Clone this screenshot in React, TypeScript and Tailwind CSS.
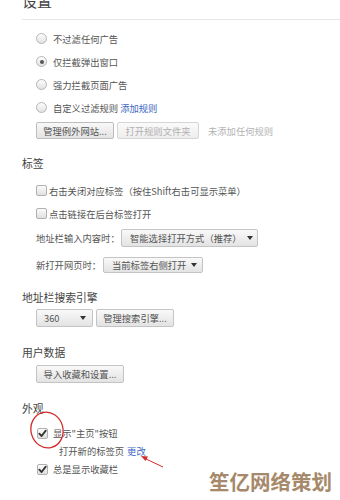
import React from "react";

const Radio = ({ checked }: { checked?: boolean }) => (
  <span className="w-[11px] h-[11px] rounded-full border border-[#b5b5b5] bg-gradient-to-b from-[#fdfdfd] to-[#e2e2e2] flex items-center justify-center shrink-0">
    {checked && <span className="w-[4px] h-[4px] rounded-full bg-[#555]" />}
  </span>
);

const Check = ({ checked }: { checked?: boolean }) => (
  <span className="w-[11px] h-[11px] rounded-[2px] border border-[#b0b0b0] bg-gradient-to-b from-[#fbfbfb] to-[#e0e0e0] flex items-center justify-center shrink-0">
    {checked && (
      <svg width="9" height="9" viewBox="0 0 10 10">
        <path d="M1.5 5.2 L4 7.8 L8.6 1.8" stroke="#333" strokeWidth="2" fill="none" strokeLinecap="round" strokeLinejoin="round" />
      </svg>
    )}
  </span>
);

const Btn = ({ children, w, disabled }: { children: React.ReactNode; w: string; disabled?: boolean }) => (
  <span
    className={
      "h-[17px] border rounded-[2px] flex items-center justify-center shrink-0 bg-gradient-to-b " +
      w +
      (disabled
        ? " border-[#d6d6d6] from-[#fafafa] to-[#eeeeee] text-[#b0b0b0]"
        : " border-[#bdbdbd] from-[#f9f9f9] to-[#e3e3e3] text-[#555]")
    }
  >
    {children}
  </span>
);

const Tri = () => (
  <svg width="6" height="4" viewBox="0 0 6 4" className="shrink-0">
    <path d="M0 0 H6 L3 4 Z" fill="#333" />
  </svg>
);

export default function App() {
  return (
    <div className="w-[340px] h-[500px] relative overflow-hidden bg-white text-[#555] text-[9.3px] leading-[12px] font-['Noto_Sans_CJK_SC',sans-serif]">
      {/* title */}
      <div className="ml-[22px] h-[20px] border-b border-[#e6e6e6] flex items-start overflow-hidden">
        <span className="block -mt-[7px] text-[15px] leading-[16px] text-[#444]">设置</span>
      </div>

      {/* ad filtering */}
      <div className="pl-[36px] mt-[7px]">
        <div className="h-[23px] flex items-center gap-[6px]">
          <Radio />
          <span>不过滤任何广告</span>
        </div>
        <div className="h-[23px] flex items-center gap-[6px]">
          <Radio checked />
          <span>仅拦截弹出窗口</span>
        </div>
        <div className="h-[23px] flex items-center gap-[6px]">
          <Radio />
          <span>强力拦截页面广告</span>
        </div>
        <div className="h-[23px] flex items-center gap-[6px]">
          <Radio />
          <span>
            自定义过滤规则 <span className="text-[#3b66c4]">添加规则</span>
          </span>
        </div>
        <div className="mt-[3px] flex items-center">
          <Btn w="w-[78px]">管理例外网站...</Btn>
          <span className="w-[3px]" />
          <Btn w="w-[82px]" disabled>
            打开规则文件夹
          </Btn>
          <span className="ml-[9px] text-[#b3b3b3]">未添加任何规则</span>
        </div>
      </div>

      {/* tabs */}
      <div className="ml-[22px] mt-[17px] text-[10.8px] leading-[14px] text-[#444]">标签</div>
      <div className="pl-[36px] mt-[9px]">
        <div className="h-[23px] flex items-center gap-[2px]">
          <Check />
          <span>右击关闭对应标签（按住Shift右击可显示菜单）</span>
        </div>
        <div className="h-[23px] flex items-center gap-[2px]">
          <Check />
          <span>点击链接在后台标签打开</span>
        </div>
        <div className="mt-[4px] flex items-center">
          <span className="w-[85px]">地址栏输入内容时：</span>
          <span className="h-[18px] w-[137px] border border-[#c4c4c4] rounded-[2px] bg-gradient-to-b from-[#f9f9f9] to-[#e3e3e3] flex items-center pl-[8px] pr-[4px] text-[#555]">
            <span className="flex-1">智能选择打开方式（推荐）</span>
            <Tri />
          </span>
        </div>
        <div className="mt-[10px] flex items-center">
          <span className="w-[67px]">新打开网页时：</span>
          <span className="h-[16px] w-[100px] border border-[#c4c4c4] rounded-[2px] bg-gradient-to-b from-[#f9f9f9] to-[#e3e3e3] flex items-center pl-[8px] pr-[5px] text-[#555]">
            <span className="flex-1">当前标签右侧打开</span>
            <Tri />
          </span>
        </div>
      </div>

      {/* search engine */}
      <div className="ml-[22px] mt-[17px] text-[10.8px] leading-[14px] text-[#444]">地址栏搜索引擎</div>
      <div className="pl-[36px] mt-[5px] flex items-center">
        <span className="h-[18px] w-[57px] border border-[#c4c4c4] rounded-[2px] bg-gradient-to-b from-[#f9f9f9] to-[#e3e3e3] flex items-center pl-[7px] pr-[6px] text-[#555]">
          <span className="flex-1">360</span>
          <Tri />
        </span>
        <span className="w-[3px]" />
        <span className="h-[18px] w-[78px] border border-[#c4c4c4] rounded-[2px] bg-gradient-to-b from-[#f9f9f9] to-[#e3e3e3] flex items-center justify-center text-[#555]">
          管理搜索引擎...
        </span>
      </div>

      {/* user data */}
      <div className="ml-[22px] mt-[18px] text-[10.8px] leading-[14px] text-[#444]">用户数据</div>
      <div className="pl-[36px] mt-[6px] flex">
        <span className="h-[18px] w-[88px] border border-[#c4c4c4] rounded-[2px] bg-gradient-to-b from-[#f9f9f9] to-[#e3e3e3] flex items-center justify-center text-[#555]">
          导入收藏和设置...
        </span>
      </div>

      {/* appearance */}
      <div className="ml-[22px] mt-[18px] text-[10.8px] leading-[14px] text-[#444]">外观</div>
      <div className="pl-[37px] mt-[8px]">
        <div className="h-[20px] flex items-center gap-[5px]">
          <Check checked />
          <span>显示"主页"按钮</span>
        </div>
        <div className="h-[16px] flex items-center pl-[22px]">
          打开新的标签页 <span className="ml-[3px] text-[#3b66c4]">更改</span>
        </div>
        <div className="h-[20px] flex items-center gap-[5px]">
          <Check checked />
          <span>总是显示收藏栏</span>
        </div>
      </div>

      {/* annotations */}
      <svg className="absolute left-0 top-0 pointer-events-none" width="340" height="500" viewBox="0 0 340 500">
        <ellipse cx="47" cy="430" rx="16" ry="18" fill="none" stroke="#d42a2a" strokeWidth="1.3" transform="rotate(-15 47 430)" />
        <line x1="163" y1="467" x2="144" y2="458" stroke="#d42a2a" strokeWidth="1" />
        <path d="M141 456 L148 456.5 L145.5 461 Z" fill="#d42a2a" />
      </svg>

      <div className="absolute left-[209px] top-[469px] text-[20.5px] leading-[24px] font-bold text-[#a5896a] font-['Noto_Sans_CJK_SC',sans-serif]">
        笙亿网络策划
      </div>
    </div>
  );
}
